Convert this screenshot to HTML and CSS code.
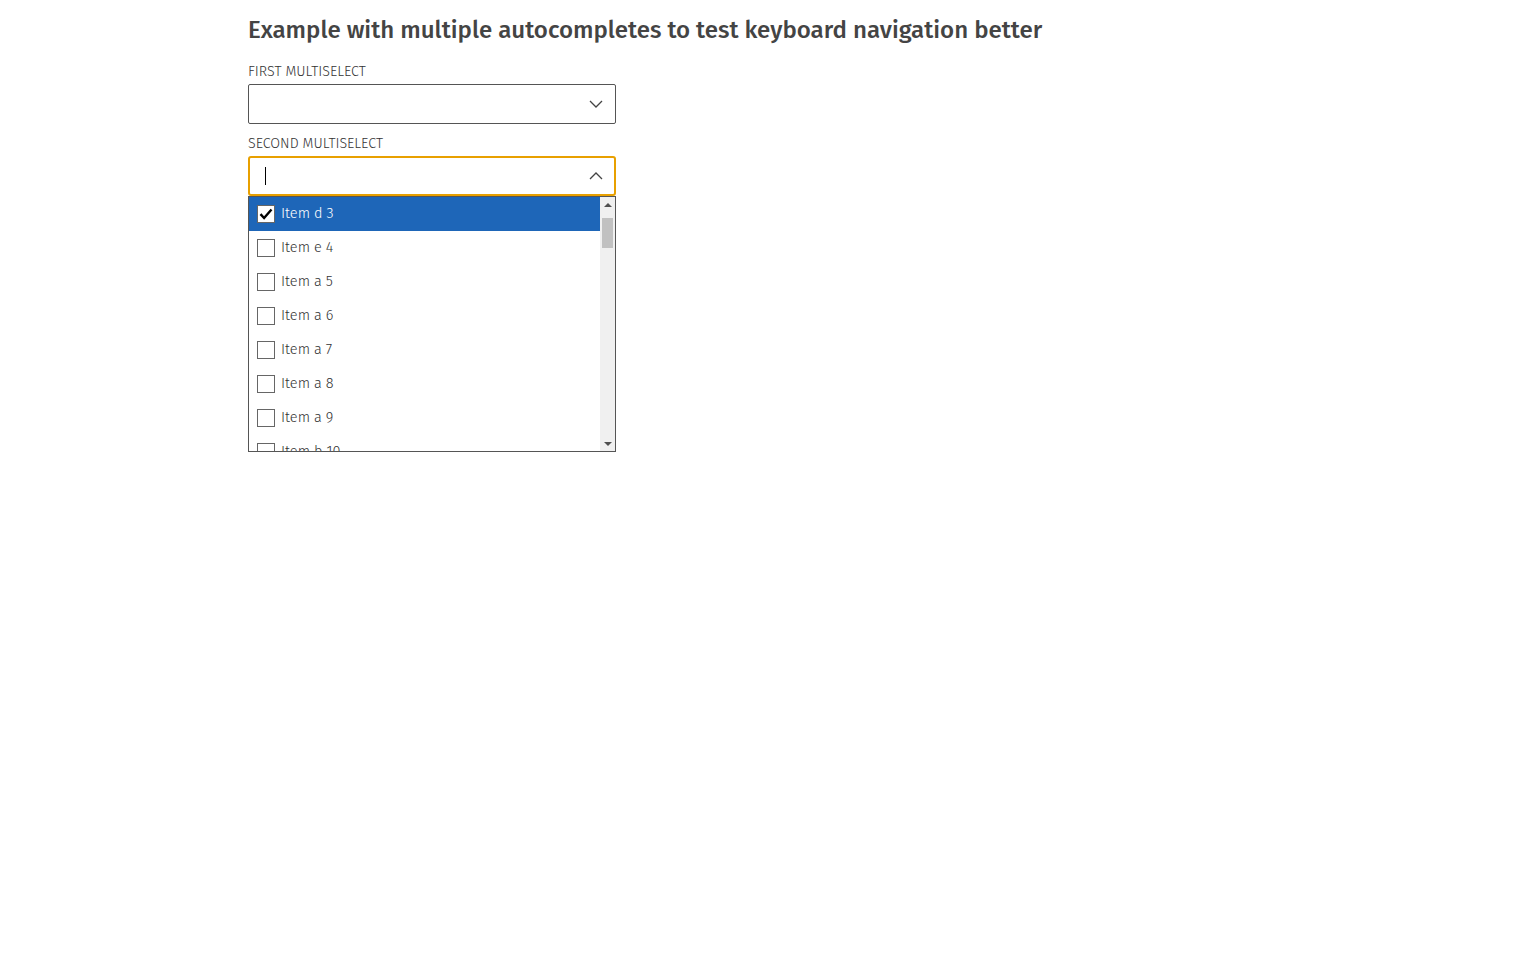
FILE: index.html
```html
<!DOCTYPE html>
<html lang="en">
<head>
<meta charset="utf-8">
<title>Multiselect</title>
<link rel="stylesheet" href="styles.css">
</head>
<body>
<main class="page">
  <h1 class="title">Example with multiple autocompletes to test keyboard navigation better</h1>

  <div class="field">
    <label class="label">FIRST MULTISELECT</label>
    <div class="control">
      <span class="input-text"></span>
      <svg class="chev" width="14" height="8" viewBox="0 0 14 8"><path d="M1 1l6 6 6-6" fill="none" stroke="#444" stroke-width="1.3"/></svg>
    </div>
  </div>

  <div class="field">
    <label class="label">SECOND MULTISELECT</label>
    <div class="control focused">
      <span class="caret"></span>
      <svg class="chev" width="14" height="8" viewBox="0 0 14 8"><path d="M1 7l6-6 6 6" fill="none" stroke="#444" stroke-width="1.3"/></svg>
    </div>
    <div class="dropdown">
      <ul class="list">
        <li class="option selected"><span class="box checked"><svg width="14" height="12" viewBox="0 0 14 12"><path d="M1.5 6.2l3.6 3.8L12.5 1.5" fill="none" stroke="#000" stroke-width="2.4"/></svg></span>Item d 3</li>
        <li class="option"><span class="box"></span>Item e 4</li>
        <li class="option"><span class="box"></span>Item a 5</li>
        <li class="option"><span class="box"></span>Item a 6</li>
        <li class="option"><span class="box"></span>Item a 7</li>
        <li class="option"><span class="box"></span>Item a 8</li>
        <li class="option"><span class="box"></span>Item a 9</li>
        <li class="option"><span class="box"></span>Item b 10</li>
      </ul>
      <div class="scrollbar">
        <span class="arrow up"></span>
        <div class="track"><div class="thumb"></div></div>
        <span class="arrow down"></span>
      </div>
    </div>
  </div>
</main>
</body>
</html>
```

FILE: styles.css
```css
* { box-sizing: border-box; }
html, body { margin: 0; padding: 0; background: #fff; }
body {
  font-family: "Fira Sans", "Open Sans", "Noto Sans", sans-serif;
  color: #444;
}
.page {
  padding: 14px 0 0 248px;
  width: 1536px;
}
.title {
  margin: 0 0 18px;
  font-size: 24.1px;
  font-weight: 500;
  line-height: 32px;
  color: #444;
}
.field { width: 368px; margin-bottom: 12px; }
.label {
  display: block;
  font-size: 14.2px;
  font-weight: 300;
  line-height: 16px;
  color: #333;
  margin-bottom: 4px;
}
.control {
  height: 40px;
  border: 1px solid #555;
  border-radius: 2px;
  display: flex;
  align-items: center;
  justify-content: space-between;
  padding: 0 12px 0 16px;
}
.control.focused {
  border: 2px solid #e8a000;
  border-radius: 3px;
  padding: 0 11px 0 15px;
}
.caret {
  width: 1px;
  height: 18px;
  background: #000;
}
.dropdown {
  height: 256px;
  border: 1px solid #555;
  display: flex;
  overflow: hidden;
}
.list {
  list-style: none;
  margin: 0;
  padding: 0;
  flex: 1;
  overflow: hidden;
}
.option {
  height: 34px;
  display: flex;
  align-items: center;
  padding-left: 8px;
  padding-bottom: 2px;
  font-size: 14.5px;
  font-weight: 300;
  color: #333;
  flex-shrink: 0;
}
.option.selected {
  background: #1e66b8;
  color: #fff;
}
.box {
  width: 18px;
  height: 18px;
  border: 1px solid #666;
  background: #fff;
  margin-right: 6px;
  margin-top: 2px;
  display: flex;
  align-items: center;
  justify-content: center;
  flex-shrink: 0;
}
.scrollbar {
  width: 15px;
  background: #f0f0f0;
  display: flex;
  flex-direction: column;
  align-items: center;
}
.arrow {
  width: 15px;
  height: 15px;
  display: flex;
  align-items: center;
  justify-content: center;
}
.arrow::after {
  content: "";
  width: 0; height: 0;
  border-left: 4px solid transparent;
  border-right: 4px solid transparent;
}
.arrow.up::after { border-bottom: 4px solid #505050; }
.arrow.down::after { border-top: 4px solid #505050; }
.track { flex: 1; width: 15px; padding: 6px 2px 0; }
.thumb { height: 30px; background: #c1c1c1; }
```
